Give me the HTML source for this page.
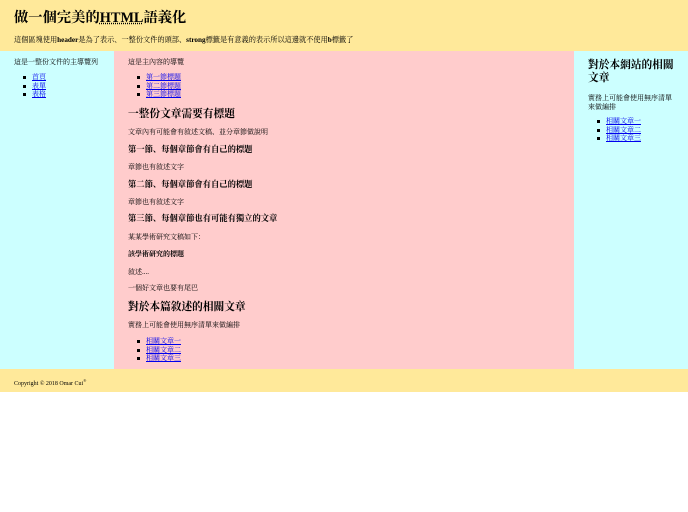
<!DOCTYPE html>
<html><head><meta charset="utf-8"><style>
*{margin:0;padding:0}
body{width:688px;height:512px;position:relative;background:#fff;font-family:"Liberation Serif","Noto Serif CJK SC","Noto Sans CJK TC",serif;color:#000;overflow:hidden}
.bg{position:absolute}
.t{position:absolute;white-space:nowrap;font-size:7px;line-height:10px}
.h1{font-size:14.3px;line-height:20px;font-weight:bold}
.h2{font-size:10.7px;line-height:14px;font-weight:bold}
.h3{font-size:8.3px;line-height:12px;font-weight:bold}
a{color:#00e;text-decoration:underline}
.li{position:absolute;font-size:7px;line-height:8.5px}
.li div::before{content:"";position:absolute;left:-9px;width:3px;height:3px;background:#000;margin-top:3px}
.li div{position:relative}
abbr{text-decoration:underline dotted}
</style></head><body>
<div class="bg" style="left:0;top:0;width:688px;height:51px;background:#ffe99a"></div>
<div class="bg" style="left:0;top:51px;width:114px;height:318px;background:#ccffff"></div>
<div class="bg" style="left:114px;top:51px;width:460px;height:318px;background:#ffcccc"></div>
<div class="bg" style="left:574px;top:51px;width:114px;height:318px;background:#ccffff"></div>
<div class="bg" style="left:0;top:369px;width:688px;height:23px;background:#ffe99a"></div>

<div class="t h1" style="left:14px;top:8px">做一個完美的<abbr>HTML</abbr>語義化</div>
<div class="t" style="left:14px;top:35px;font-size:7.2px">這個區塊使用<b>header</b>是為了表示、一整份文件的頭部、<b>strong</b>標籤是有意義的表示所以這邊就不使用<b>b</b>標籤了</div>

<div class="t" style="left:14px;top:57px">這是一整份文件的主導覽列</div>
<div class="li" style="left:32px;top:73px"><div><a>首頁</a></div><div><a>表單</a></div><div><a>表格</a></div></div>

<div class="t" style="left:128px;top:57px">這是主內容的導覽</div>
<div class="li" style="left:146px;top:73px"><div><a>第一節標題</a></div><div><a>第二節標題</a></div><div><a>第三節標題</a></div></div>
<div class="t h2" style="left:128px;top:107px">一整份文章需要有標題</div>
<div class="t" style="left:128px;top:127px">文章內有可能會有敘述文稿、並分章節做說明</div>
<div class="t h3" style="left:128px;top:144px">第一節、每個章節會有自己的標題</div>
<div class="t" style="left:128px;top:162px">章節也有敘述文字</div>
<div class="t h3" style="left:128px;top:179px">第二節、每個章節會有自己的標題</div>
<div class="t" style="left:128px;top:197px">章節也有敘述文字</div>
<div class="t h3" style="left:128px;top:213px">第三節、每個章節也有可能有獨立的文章</div>
<div class="t" style="left:128px;top:232px">某某學術研究文稿如下：</div>
<div class="t" style="left:128px;top:249px;font-weight:bold">該學術研究的標題</div>
<div class="t" style="left:128px;top:267px">敘述....</div>
<div class="t" style="left:128px;top:283px">一個好文章也要有尾巴</div>
<div class="t h2" style="left:128px;top:300px">對於本篇敘述的相關文章</div>
<div class="t" style="left:128px;top:320px">實務上可能會使用無序清單來做編排</div>
<div class="li" style="left:146px;top:337px"><div><a>相關文章一</a></div><div><a>相關文章二</a></div><div><a>相關文章三</a></div></div>

<div class="t h2" style="left:588px;top:59px;line-height:13px">對於本網站的相關<br>文章</div>
<div class="t" style="left:588px;top:94px;line-height:8.5px">實務上可能會使用無序清單<br>來做編排</div>
<div class="li" style="left:606px;top:117px"><div><a>相關文章一</a></div><div><a>相關文章二</a></div><div><a>相關文章三</a></div></div>

<div class="t" style="left:14px;top:376px;font-size:6px">Copyright © 2018 Omar Cui<sup style="font-size:4px">®</sup></div>
</body></html>
